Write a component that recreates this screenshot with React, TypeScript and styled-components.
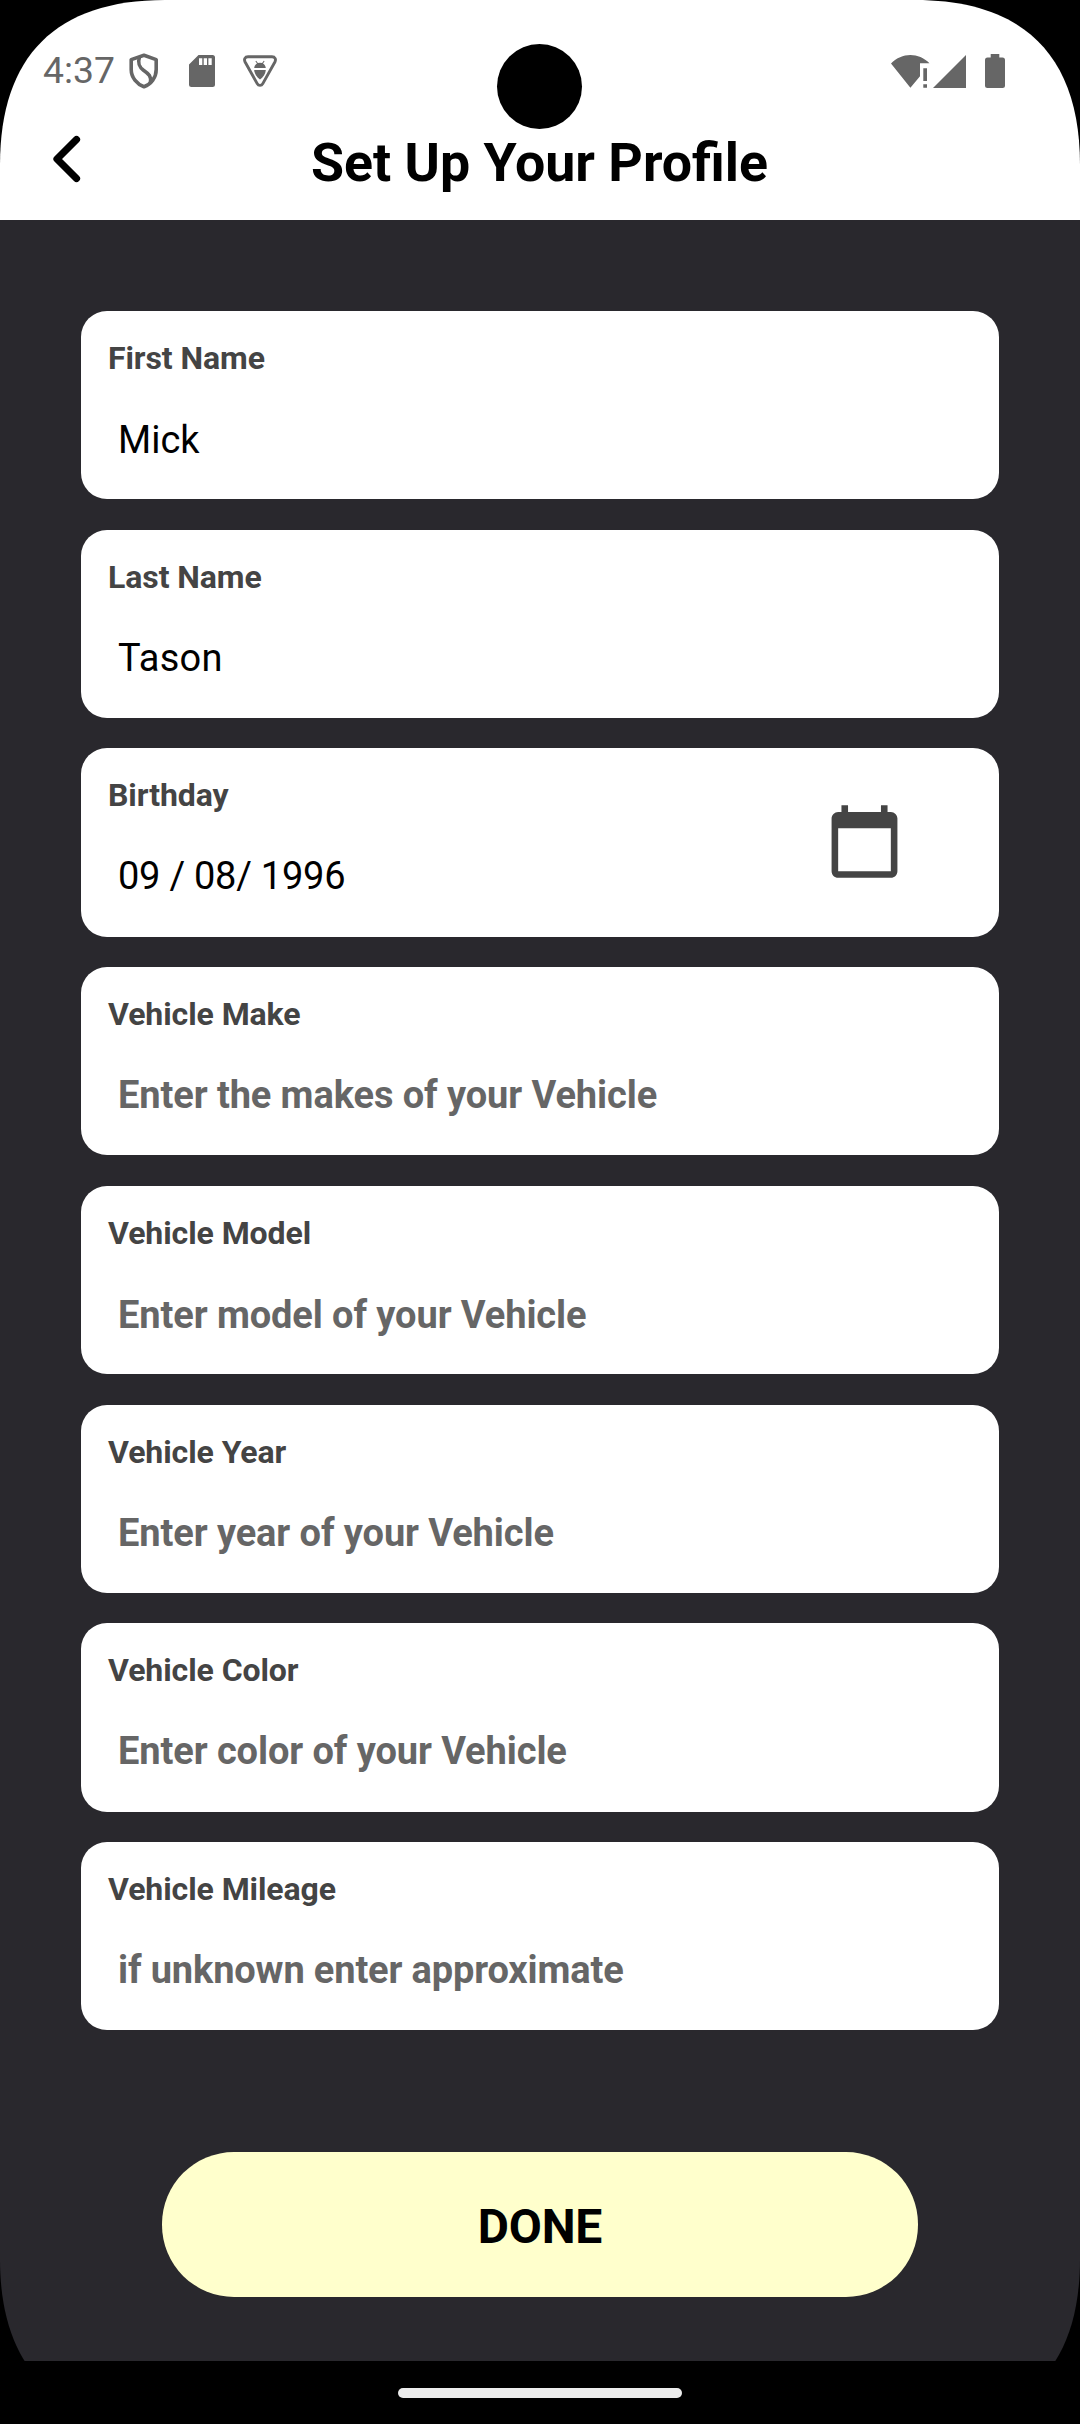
import React from "react";
import styled, { createGlobalStyle } from "styled-components";

const GlobalStyle = createGlobalStyle`
  html, body {
    margin: 0;
    background: #000;
  }
  * {
    box-sizing: border-box;
  }
`;

const Device = styled.div`
  display: flex;
  flex-direction: column;
  width: 1080px;
  height: 2424px;
  background: #000;
  font-family: Roboto, "Noto Sans", sans-serif;
  clip-path: path(
    "M0 165C0 56 56 0 165 0H915C1024 0 1080 56 1080 165V2259C1080 2368 1024 2424 915 2424H165C56 2424 0 2368 0 2259Z"
  );
`;

const Header = styled.header`
  position: relative;
  display: flex;
  flex-direction: column;
  flex: none;
  height: 220px;
  background: #fff;
`;

const Camera = styled.div`
  position: absolute;
  left: 497px;
  top: 44px;
  width: 85px;
  height: 85px;
  border-radius: 50%;
  background: #000;
`;

const StatusBar = styled.div`
  display: flex;
  align-items: center;
  justify-content: space-between;
  height: 100px;
  padding: 42px 75px 0 43px;
  color: #666;
`;

const StatusGroup = styled.div`
  display: flex;
  align-items: center;
  height: 58px;
`;

const Clock = styled.span`
  width: 82px;
  font-size: 37.3px;
  line-height: 56px;
  padding-bottom: 2px;
`;

const Glyph = styled.svg<{ $w: number; $h: number; $ml?: number }>`
  display: block;
  flex: none;
  width: ${(p) => p.$w}px;
  height: ${(p) => p.$h}px;
  margin-left: ${(p) => p.$ml ?? 0}px;
`;

const TitleBar = styled.div`
  display: grid;
  grid-template-columns: 200px 1fr 200px;
  align-items: center;
  height: 120px;
`;

const BackButton = styled.button`
  display: flex;
  justify-content: flex-start;
  padding: 0 0 2px 48px;
  border: 0;
  background: none;
  color: #000;
`;

const Title = styled.h1`
  margin: 6px 1px 0 0;
  font-size: 53.7px;
  font-weight: 700;
  line-height: 64px;
  text-align: center;
  white-space: nowrap;
  color: #000;
`;

const Form = styled.main`
  display: flex;
  flex-direction: column;
  flex: none;
  height: 2141px;
  padding: 90.9px 81px 0;
  background: #29282d;
`;

const Fields = styled.div`
  display: grid;
  grid-auto-rows: 188.3px;
  gap: 30.45px;
`;

const Card = styled.section`
  display: flex;
  align-items: center;
  justify-content: space-between;
  padding: 0 95px 2px 27px;
  border-radius: 26px;
  background: #fff;
`;

const CardText = styled.div`
  display: flex;
  flex-direction: column;
  align-self: stretch;
  padding-top: 27px;
`;

const Label = styled.span`
  font-size: 32px;
  font-weight: 700;
  letter-spacing: -0.08px;
  line-height: 40px;
  color: #444;
`;

const Value = styled.span<{ $hint?: boolean; $spacing?: number; $drop?: number }>`
  padding: ${(p) => 36 + (p.$drop ?? 0)}px 0 0 10px;
  font-size: 38px;
  font-weight: ${(p) => (p.$hint ? 700 : 400)};
  letter-spacing: ${(p) => p.$spacing ?? (p.$hint ? -0.09 : 0)}px;
  line-height: 50px;
  white-space: pre;
  color: ${(p) => (p.$hint ? "#666" : "#000")};
`;

const DoneButton = styled.button`
  flex: none;
  align-self: center;
  width: 756px;
  height: 145px;
  margin-top: 121.6px;
  padding: 4px 0 0;
  border: 0;
  border-radius: 72px;
  background: #ffffcc;
  font-family: inherit;
  font-size: 48px;
  font-weight: 700;
  letter-spacing: -0.2px;
  color: #000;
`;

const NavBar = styled.footer`
  display: flex;
  justify-content: center;
  padding-top: 27px;
`;

const HomeHandle = styled.div`
  width: 284px;
  height: 10px;
  border-radius: 5px;
  background: #ececec;
`;

const ShieldIcon = () => (
  <Glyph $w={30} $h={36} $ml={4} viewBox="0 0 30 36">
    <g fill="none" stroke="currentColor" strokeWidth="3.6" strokeLinejoin="round">
      <path d="M15 2.2L27.2 6.6V16.5C27.2 24.5 22.2 31 15 33.8C7.800 31 2.200 24.500 2.200 16.500V6.600Z" />
      <path d="M10.5 3.800C8.500 10.500 10 13.800 14.500 17.200C20 21 22.500 23.500 21.500 29.500" />
    </g>
  </Glyph>
);

const SdCardIcon = () => (
  <Glyph $w={26} $h={32} $ml={30} viewBox="0 0 26 32">
    <path
      fill="currentColor"
      fillRule="evenodd"
      d="M9.500 0H23.500A2.500 2.500 0 0 1 26 2.500V29.500A2.500 2.500 0 0 1 23.500 32H2.500A2.500 2.500 0 0 1 0 29.500V9.500ZM10 3.300V10H13.300V3.300ZM14.700 3.300V10H18V3.300ZM19.400 3.300V10H22.700V3.300Z"
    />
  </Glyph>
);

const DebugIcon = () => (
  <Glyph $w={34} $h={32} $ml={28} viewBox="0 0 34 32">
    <path
      fill="none"
      stroke="currentColor"
      strokeWidth="2.9"
      strokeLinejoin="round"
      d="M5 1.800H29C32 1.800 33.300 4.200 31.900 7L19.800 28.600C18.500 31 15.500 31 14.200 28.600L2.100 7C0.700 4.200 2 1.800 5 1.800Z"
    />
    <g fill="currentColor">
      <path d="M11.200 13C11.500 10.800 12.500 9.300 14 8.500L12.400 6.200L13.200 5.700L14.900 8.100Q17 7.500 19.100 8.100L20.800 5.700L21.600 6.200L20 8.500C21.500 9.300 22.500 10.800 22.800 13Z" />
      <path d="M11.200 15H22.800C22.500 19 20 22.500 17 24.500C14 22.500 11.500 19 11.200 15Z" />
    </g>
  </Glyph>
);

const WifiAlertIcon = () => (
  <Glyph $w={39} $h={33} viewBox="0 0 39 33">
    <g fill="currentColor">
      <path d="M0 8.500C11 -2.800 27.500 -2.800 38.500 8.300H29V21.200L19.400 32.700Z" />
      <path d="M32.300 13.200H36V26H32.300ZM32.300 29.300H36V32.700H32.300Z" />
    </g>
  </Glyph>
);

const SignalIcon = () => (
  <Glyph $w={33} $h={33} $ml={3} viewBox="0 0 33 33">
    <path fill="currentColor" d="M33 0V33H0Z" />
  </Glyph>
);

const BatteryIcon = () => (
  <Glyph $w={20} $h={34} $ml={19} viewBox="0 0 20 34">
    <path
      fill="currentColor"
      d="M5.700 0H14.300V3.400H17.500A2.500 2.500 0 0 1 20 5.900V31.500A2.500 2.500 0 0 1 17.500 34H2.500A2.500 2.500 0 0 1 0 31.500V5.900A2.500 2.500 0 0 1 2.500 3.400H5.700Z"
    />
  </Glyph>
);

const BackIcon = () => (
  <Glyph $w={36} $h={54} viewBox="0 0 36 54">
    <path
      d="M28.500 7.500L9 27L28.500 46.500"
      fill="none"
      stroke="currentColor"
      strokeWidth="7.200"
      strokeLinecap="round"
      strokeLinejoin="round"
    />
  </Glyph>
);

const CalendarIcon = () => (
  <Glyph $w={79} $h={79} viewBox="0 0 24 24">
    <path
      fill="#444"
      d="M20 3h-1V1h-2v2H7V1H5v2H4c-1.100 0-2 .9-2 2v16c0 1.100.9 2 2 2h16c1.100 0 2-.9 2-2V5c0-1.100-.9-2-2-2zm0 18H4V8h16v13z"
    />
  </Glyph>
);

interface Field {
  label: string;
  text: string;
  hint?: boolean;
  spacing?: number;
  drop?: number;
  calendar?: boolean;
}

const fields: Field[] = [
  { label: "First Name", text: "Mick", drop: 1 },
  { label: "Last Name", text: "Tason", spacing: 0.25 },
  { label: "Birthday", text: "09 / 08/ 1996", spacing: -0.25, calendar: true },
  { label: "Vehicle Make", text: "Enter the makes of your Vehicle", hint: true },
  { label: "Vehicle Model", text: "Enter model of your Vehicle", hint: true, drop: 1 },
  { label: "Vehicle Year", text: "Enter year of your Vehicle", hint: true },
  { label: "Vehicle Color", text: "Enter color of your Vehicle", hint: true },
  { label: "Vehicle Mileage", text: "if unknown enter approximate", hint: true, spacing: -0.14 },
];

export default function App() {
  return (
    <>
      <GlobalStyle />
      <Device>
        <Header>
          <StatusBar>
            <StatusGroup>
              <Clock>4:37</Clock>
              <ShieldIcon />
              <SdCardIcon />
              <DebugIcon />
            </StatusGroup>
            <StatusGroup>
              <WifiAlertIcon />
              <SignalIcon />
              <BatteryIcon />
            </StatusGroup>
          </StatusBar>
          <TitleBar>
            <BackButton aria-label="Back">
              <BackIcon />
            </BackButton>
            <Title>Set Up Your Profile</Title>
          </TitleBar>
          <Camera />
        </Header>
        <Form>
          <Fields>
            {fields.map((field) => (
              <Card key={field.label}>
                <CardText>
                  <Label>{field.label}</Label>
                  <Value $hint={field.hint} $spacing={field.spacing} $drop={field.drop}>
                    {field.text}
                  </Value>
                </CardText>
                {field.calendar && <CalendarIcon />}
              </Card>
            ))}
          </Fields>
          <DoneButton>DONE</DoneButton>
        </Form>
        <NavBar>
          <HomeHandle />
        </NavBar>
      </Device>
    </>
  );
}
